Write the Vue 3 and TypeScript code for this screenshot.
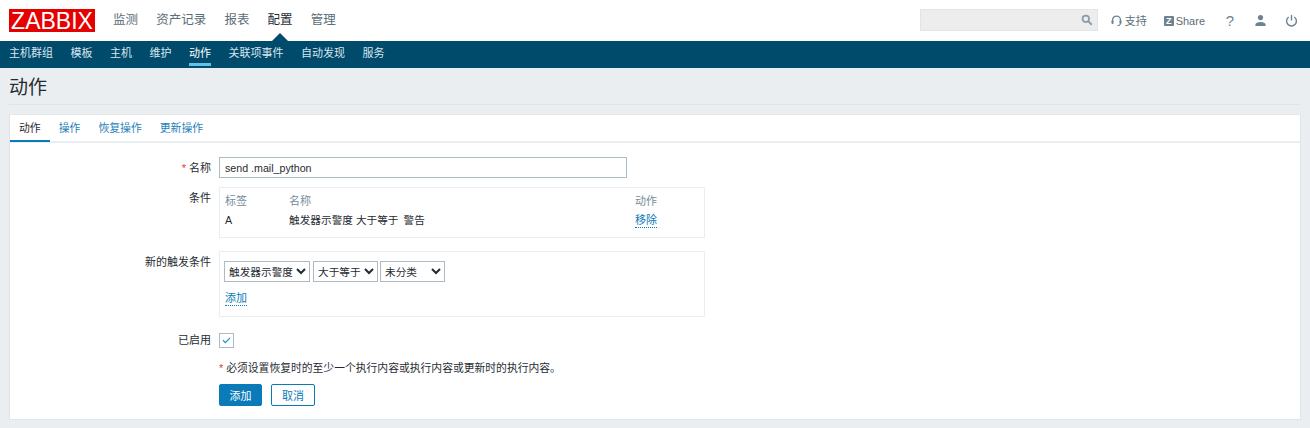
<script setup lang="ts">
const mainMenu: string[] = ['监测', '资产记录', '报表', '配置', '管理']
const subMenu: string[] = ['主机群组', '模板', '主机', '维护', '动作', '关联项事件', '自动发现', '服务']
const tabs: string[] = ['动作', '操作', '恢复操作', '更新操作']
</script>

<template>
  <div class="page">
    <header class="top">
      <div class="logo">ZABBIX</div>
      <nav class="main">
        <a v-for="m in mainMenu" :key="m" :class="{ sel: m === '配置' }">{{ m }}</a>
      </nav>
      <div class="tools">
        <div class="search">
          <svg width="12" height="12" viewBox="0 0 14 14"><circle cx="5.6" cy="5.6" r="3.8" fill="none" stroke="#8c9ba5" stroke-width="2"/><path d="M8.6 8.6 12.6 12.6" stroke="#8c9ba5" stroke-width="2.4"/></svg>
        </div>
        <a class="tool support">
          <svg width="11" height="12" viewBox="0 0 13 14"><path d="M1.8 8V6a4.7 4.7 0 0 1 9.4 0v2" fill="none" stroke="#6d8391" stroke-width="1.6"/><rect x="0.6" y="6.4" width="2.4" height="4" rx="1" fill="#6d8391"/><rect x="10" y="6.4" width="2.4" height="4" rx="1" fill="#6d8391"/><path d="M11 10.2c0 1.6-1.4 2.2-3.4 2.2" fill="none" stroke="#6d8391" stroke-width="1.2"/></svg>
          <span>支持</span>
        </a>
        <a class="tool share"><i class="z">Z</i><span>Share</span></a>
        <a class="icon help">?</a>
        <a class="icon">
          <svg width="13" height="13" viewBox="0 0 14 14"><circle cx="7" cy="3.8" r="2.8" fill="#6d8391"/><path d="M1.5 13V11.6C1.5 9.6 4 8.6 7 8.6s5.5 1 5.5 3V13Z" fill="#6d8391"/></svg>
        </a>
        <a class="icon">
          <svg width="13" height="13" viewBox="0 0 14 14"><path d="M4 3.2a5.3 5.3 0 1 0 6 0" fill="none" stroke="#6d8391" stroke-width="1.5"/><path d="M7 1v6" stroke="#6d8391" stroke-width="1.5"/></svg>
        </a>
      </div>
    </header>

    <nav class="sub">
      <a v-for="s in subMenu" :key="s" :class="{ sel: s === '动作' }">{{ s }}</a>
    </nav>

    <main class="content">
      <h1>动作</h1>
      <section class="card">
        <div class="tabs">
          <a v-for="t in tabs" :key="t" :class="{ sel: t === '动作' }">{{ t }}</a>
        </div>
        <div class="form">
          <div class="row r-name">
            <label><em>*</em> 名称</label>
            <input class="name" type="text" value="send .mail_python" />
          </div>
          <div class="row r-cond">
            <label>条件</label>
            <div class="box cond">
              <div class="cols head"><span>标签</span><span>名称</span><span>动作</span></div>
              <div class="cols"><span>A</span><span>触发器示警度 大于等于 <span class="sev">警告</span></span><a class="dot remove">移除</a></div>
            </div>
          </div>
          <div class="row r-new">
            <label>新的触发条件</label>
            <div class="box newc">
              <div class="selects">
                <select class="s1"><option>触发器示警度</option></select>
                <select class="s2"><option>大于等于</option></select>
                <select class="s3"><option>未分类</option></select>
              </div>
              <a class="dot add">添加</a>
            </div>
          </div>
          <div class="row r-en">
            <label>已启用</label>
            <span class="check">
              <svg width="9" height="7" viewBox="0 0 11 9"><path d="M1 4.2 4 7.2 10 1.2" fill="none" stroke="#1f8fd0" stroke-width="1.5"/></svg>
            </span>
          </div>
          <div class="row r-note">
            <label></label>
            <p><em>*</em> 必须设置恢复时的至少一个执行内容或执行内容或更新时的执行内容。</p>
          </div>
          <div class="row r-btn">
            <label></label>
            <div class="btns">
              <button class="primary">添加</button>
              <button class="ghost">取消</button>
            </div>
          </div>
        </div>
      </section>
    </main>
  </div>
</template>

<style>
html, body { margin: 0; background: #ebeef0; }
</style>

<style scoped>
.page {
  width: 1310px;
  height: 428px;
  overflow: hidden;
  background: #ebeef0;
  color: #1f2c33;
  font: 10.67px/14px "Liberation Sans", "Noto Sans CJK SC", sans-serif;
}
a { cursor: pointer; }

.top {
  height: 41px;
  background: #fff;
  display: flex;
  align-items: center;
  padding: 0 9px;
}
.logo {
  width: 86px;
  height: 23px;
  margin-top: -1px;
  background: #e60000;
  color: #fff;
  font: 400 23px/24px "Liberation Sans", sans-serif;
  text-align: center;
}
.main { display: flex; gap: 18.2px; margin-left: 18px; margin-top: -1px; }
.main a { font-size: 12.5px; line-height: 20px; color: #5c6d77; position: relative; }
.main a.sel { color: #1f2c33; }
.main a.sel::after {
  content: '';
  position: absolute;
  left: 50%;
  margin-left: -8px;
  bottom: -11px;
  border: 8px solid transparent;
  border-top: 0;
  border-bottom-color: #004a6b;
}
.tools { margin-left: auto; display: flex; align-items: center; }
.search {
  width: 172px;
  height: 20px;
  border: 1px solid #e4e4e4;
  background: #ededed;
  display: flex;
  align-items: center;
  justify-content: flex-end;
  padding-right: 4px;
  margin-right: 13px;
  margin-top: -1px;
  box-sizing: content-box;
}
.tool { display: flex; align-items: center; color: #5c6d77; font-size: 11px; }
.support { gap: 3px; margin-right: 17px; }
.share { margin-right: 18px; gap: 2px; }
.z {
  width: 10px;
  height: 10px;
  border-radius: 1px;
  background: #6d8391;
  color: #fff;
  font: 700 9px/10px "Liberation Sans", sans-serif;
  text-align: center;
}
.icon { width: 14px; display: flex; justify-content: center; margin-right: 16px; color: #6d8391; }
.icon:nth-last-child(2) { margin-right: 17px; }
.icon:last-child { margin-right: 3px; }
.help { font-size: 15px; }

.sub {
  height: 27px;
  background: #004a6b;
  display: flex;
  gap: 17.5px;
  padding: 0 9px;
}
.sub a {
  color: #d8e6ee;
  font-size: 11px;
  line-height: 24px;
  height: 25px;
  box-sizing: border-box;
}
.sub a.sel { color: #fff; border-bottom: 3px solid #5cc3ea; }

.content { padding: 0 9px; }
h1 {
  margin: 0 0 9px;
  height: 36px;
  border-bottom: 1px solid #e0e4e7;
  font: 400 19px/40px "Liberation Sans", "Noto Sans CJK SC", sans-serif;
  color: #1f2c33;
}
.card {
  height: 306px;
  background: #fff;
  border: 1px solid #dfe4e7;
  border-top-color: #e6e9eb;
  box-sizing: border-box;
}
.tabs {
  height: 28px;
  display: flex;
  border-bottom: 2px solid #ebeef0;
  box-sizing: border-box;
}
.tabs a {
  padding: 0 9px;
  line-height: 27px;
  height: 27px;
  box-sizing: border-box;
  color: #1f7fb8;
  font-size: 10.85px;
}
.tabs a.sel { color: #1f2c33; border-bottom: 2px solid #0a7ab8; }

.form { padding-top: 14px; }
.row { display: flex; }
.row > label {
  width: 201px;
  padding-right: 8px;
  box-sizing: content-box;
  text-align: right;
  flex: none;
  font-size: 11px;
  line-height: 22px;
}
em { color: #e33734; font-style: normal; }
.name {
  width: 408px;
  height: 21px;
  box-sizing: border-box;
  border: 1px solid #acbbc4;
  border-radius: 0;
  padding: 0 5px;
  margin: 0;
  color: #1f2c33;
  font: 10.67px "Liberation Sans", "Noto Sans CJK SC", sans-serif;
  outline: none;
}
.r-cond { margin-top: 8px; }
.box {
  width: 486px;
  border: 1px solid #ebeef0;
  box-sizing: border-box;
  flex: none;
}
.cond { height: 51px; padding: 5px 5px 0; }
.cols { display: grid; grid-template-columns: 64px 346px 1fr; line-height: 16px; margin-top: 3px; }
.cols.head { margin-top: 0; color: #768d99; font-size: 11px; }
.sev { margin-left: 2px; }
.dot { color: #0a7ab8; border-bottom: 1px dotted #0a7ab8; justify-self: start; line-height: 14px; font-size: 11px; }
.remove { margin-top: 1px; }
.r-new { margin-top: 13px; }
.newc { height: 66px; padding: 9px 4px 0; }
.selects { display: flex; }
select {
  height: 21px;
  border: 1px solid #acbbc4;
  border-radius: 0;
  background: #fff;
  color: #1f2c33;
  padding: 0;
  margin: 0;
  font: 10.67px "Liberation Sans", "Noto Sans CJK SC", sans-serif;
  outline: none;
}
.s1 { width: 86px; margin-right: 3px; }
.s2 { width: 65px; margin-right: 2px; }
.s3 { width: 65px; }
.add { display: inline-block; margin-top: 9px; margin-left: 1px; }
.r-en { margin-top: 12px; align-items: center; }
.check {
  width: 15px;
  height: 15px;
  box-sizing: border-box;
  border: 1px solid #acbbc4;
  display: flex;
  align-items: center;
  justify-content: center;
}
.r-note { margin-top: 10px; }
.r-note p { margin: 0; line-height: 14px; font-size: 10.8px; }
.r-btn { margin-top: 9px; }
.btns { display: flex; gap: 9px; }
button {
  width: 44px;
  height: 22px;
  box-sizing: border-box;
  border-radius: 2px;
  font: 11px "Liberation Sans", "Noto Sans CJK SC", sans-serif;
  padding: 0;
  margin: 0;
}
.primary { background: #0a7ab8; border: 1px solid #0a7ab8; color: #fff; width: 43px; }
.ghost { background: #fff; border: 1px solid #0a7ab8; color: #0a7ab8; }
</style>
